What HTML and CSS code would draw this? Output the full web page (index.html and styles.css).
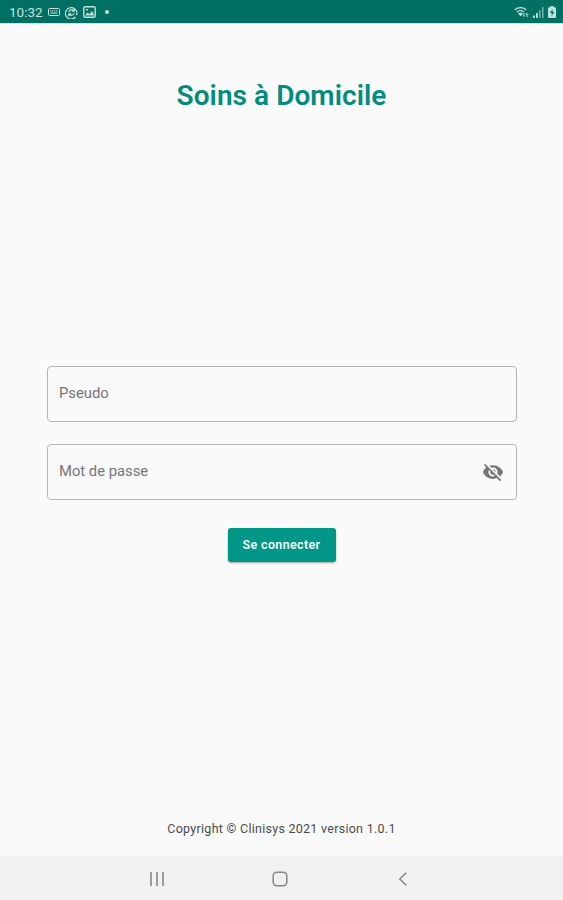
FILE: index.html
```html
<!DOCTYPE html>
<html lang="fr">
<head>
  <meta charset="utf-8">
  <title>Soins à Domicile</title>
  <link rel="stylesheet" href="styles.css">
</head>
<body>
  <div class="screen">
    <div class="status-bar">
      <div class="status-left">
        <span class="clock">10:32</span>
        <svg class="keyboard" width="12" height="8" viewBox="0 0 12 8" fill="none" stroke="currentColor">
          <rect x=".5" y=".5" width="11" height="7" rx="1"/>
          <path d="M2 2.8h8" stroke-dasharray="1.2 .8"/>
          <path d="M2.5 5h7"/>
        </svg>
        <svg class="sync" width="13" height="13" viewBox="0 0 13 13" fill="none" stroke="currentColor" stroke-width="1.2">
          <path d="M10.500 11A5.700 5.700 0 1 1 11.600 9M3.800 6.200a2.900 2.900 0 0 1 5-1.500M9.200 2.800v2.400H6.800M9.200 7a2.900 2.900 0 0 1-5 1.400M3.900 10.200V7.900h2.300"/>
        </svg>
        <svg class="picture" width="13" height="12" viewBox="0 0 13 12">
          <rect x=".8" y=".8" width="11.4" height="10.4" rx="1.2" fill="none" stroke="currentColor" stroke-width="1.4"/>
          <path d="M2 9.5l2.7-3.3 1.8 2L9 5l2.5 4.5z" fill="currentColor"/>
          <circle cx="4" cy="3.8" r="1" fill="currentColor"/>
        </svg>
        <span class="dot"></span>
      </div>
      <div class="status-right">
        <svg width="15" height="12" viewBox="0 0 15 12" fill="none" stroke="currentColor">
          <path d="M.8 3.8a8.5 8.5 0 0 1 11.4 0M2.7 6a5.7 5.7 0 0 1 7.6 0" stroke-width="1.3"/>
          <path d="M4 7.4a4 4 0 0 1 5 0L6.5 10.3z" fill="currentColor" stroke="none"/>
          <path d="M10 7v3.5M8.8 9.3L10 10.7M13 11V7.5M11.9 8.7L13 7.4l1.2 1.3"/>
        </svg>
        <svg width="11" height="11" viewBox="0 0 11 11" fill="currentColor">
          <path d="M0 8.5h1.8V11H0zM3 6h1.8v5H3z"/>
          <path d="M6 3h1.6v8H6zM9 0h1.6v11H9z" opacity=".55"/>
        </svg>
        <svg width="8" height="12" viewBox="0 0 8 12">
          <path d="M2.5 0h3v1.2H7a1 1 0 0 1 1 1V11a1 1 0 0 1-1 1H1a1 1 0 0 1-1-1V2.200a1 1 0 0 1 1-1h1.500z" fill="currentColor"/>
          <path d="M4.600 3L2 7h1.700v3L6.200 6H4.600z" fill="#006f63"/>
        </svg>
      </div>
    </div>

    <form class="login">
      <h1>Soins à Domicile</h1>
      <div class="field">
        <input type="text" placeholder="Pseudo">
      </div>
      <div class="field">
        <input type="password" placeholder="Mot de passe">
        <svg class="eye" width="22" height="22" viewBox="0 0 24 24" fill="currentColor">
          <path d="M12 7c2.76 0 5 2.240 5 5 0 .65-.13 1.260-.36 1.830l2.920 2.920c1.510-1.260 2.700-2.890 3.430-4.750-1.730-4.390-6-7.500-11-7.500-1.400 0-2.740.25-3.980.7l2.160 2.160C10.740 7.130 11.350 7 12 7zM2 4.270l2.280 2.280.46.46C3.080 8.300 1.780 10.020 1 12c1.730 4.390 6 7.500 11 7.500 1.550 0 3.030-.3 4.380-.84l.42.42L19.730 22 21 20.730 3.270 3 2 4.270zM7.530 9.800l1.550 1.550c-.05.21-.08.43-.08.65 0 1.660 1.340 3 3 3 .22 0 .44-.03.65-.08l1.550 1.550c-.67.33-1.410.53-2.200.53-2.760 0-5-2.240-5-5 0-.79.2-1.530.53-2.200zm4.310-.78l3.150 3.150.02-.16c0-1.660-1.340-3-3-3l-.17.01z"/>
        </svg>
      </div>
      <button class="btn" type="button">Se connecter</button>
      <p class="copyright">Copyright © Clinisys 2021 version 1.0.1</p>
    </form>

    <div class="nav-bar">
      <svg width="16" height="16" viewBox="0 0 16 16" stroke="currentColor" stroke-width="1.6">
        <path d="M2 1v14M8 1v14M14 1v14"/>
      </svg>
      <svg width="16" height="16" viewBox="0 0 16 16" fill="none" stroke="currentColor" stroke-width="1.5">
        <rect x="1.200" y="1.200" width="13.600" height="13.600" rx="3.800"/>
      </svg>
      <svg width="16" height="16" viewBox="0 0 16 16" fill="none" stroke="currentColor" stroke-width="1.5">
        <path d="M11.300 1.700L4.800 8l6.500 6.300"/>
      </svg>
    </div>
  </div>
</body>
</html>
```

FILE: styles.css
```css
* {
  box-sizing: border-box;
}
body {
  margin: 0;
  font-family: Roboto, "Liberation Sans", sans-serif;
  background: #fafafa;
}
.screen {
  display: flex;
  flex-direction: column;
  height: 900px;
}
.status-bar {
  display: flex;
  justify-content: space-between;
  height: 23px;
  padding: 1px 7px 0 9px;
  background: #007063;
  color: #c3e0dc;
  box-shadow: 0 1px 1px rgba(0,0,0,0.12);
}
.status-left,
.status-right {
  display: flex;
  align-items: center;
}
.clock {
  width: 39px;
  font-size: 13.5px;
}
.sync {
  margin-left: 5px;
}
.picture {
  margin-left: 5px;
}
.dot {
  width: 4px;
  height: 4px;
  margin-left: 9px;
  border-radius: 50%;
  background: #c3e0dc;
}
.status-right {
  gap: 4px;
}
.login {
  flex: 1;
  display: flex;
  flex-direction: column;
  align-items: center;
  padding: 56px 46px 19px;
}
h1 {
  margin: 0 0 254px;
  font-size: 28px;
  line-height: 33px;
  font-weight: 600;
  letter-spacing: 0.05px;
  color: #008c7e;
}
.field {
  display: flex;
  align-items: center;
  width: 470px;
  height: 56px;
  margin: 0 0 22px 1px;
  padding: 0 12px 0 11px;
  border: 1px solid #b5b5b5;
  border-radius: 4px;
}
.field input {
  flex: 1;
  padding: 0 0 2px;
  border: none;
  outline: none;
  background: none;
  font: 14.8px Roboto, "Liberation Sans", sans-serif;
}
.field input::placeholder {
  color: #757575;
}
.eye {
  color: #757575;
}
.btn {
  width: 108px;
  height: 34px;
  margin-top: 6px;
  padding: 0 0 2px;
  border: none;
  border-radius: 3px;
  background: #009688;
  color: #f2fffd;
  font: 600 12.5px Roboto, "Liberation Sans", sans-serif;
  letter-spacing: 0.35px;
  box-shadow: 0 1px 2px rgba(0,0,0,0.35);
}
.copyright {
  margin: auto 0 0;
  font-size: 12.5px;
  line-height: 16px;
  letter-spacing: 0.27px;
  color: #4a4a4a;
}
.nav-bar {
  display: flex;
  justify-content: center;
  align-items: center;
  gap: 107px;
  height: 44px;
  padding: 1px 3px 0 0;
  background: #f1f1f1;
  color: #858585;
}
```
